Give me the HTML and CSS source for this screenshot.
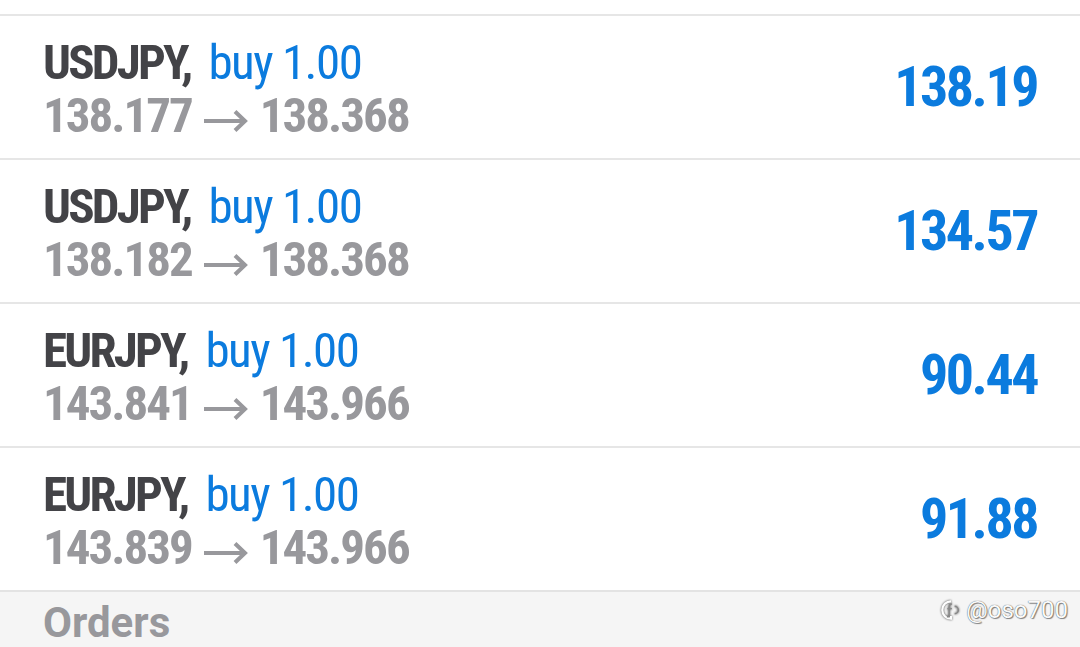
FILE: index.html
```html
<!DOCTYPE html>
<html lang="en">
<head>
    <meta charset="UTF-8">
    <meta name="viewport" content="width=device-width, initial-scale=1.0">
    <title>Trade</title>
    <link rel="stylesheet" href="styles.css">
</head>
<body>
    <div class="trade-list">
        <div class="trade-row">
            <div class="trade-info">
                <div class="trade-title"><span class="symbol">USDJPY,</span><span class="side">buy 1.00</span></div>
                <div class="trade-prices">138.177<svg class="arrow" viewBox="0 0 44 24" width="44" height="24"><path d="M0 12H41M31 2.5L41 12L31 21.5" fill="none" stroke="#98989c" stroke-width="4"/></svg>138.368</div>
            </div>
            <div class="profit">138.19</div>
        </div>
        <div class="trade-row">
            <div class="trade-info">
                <div class="trade-title"><span class="symbol">USDJPY,</span><span class="side">buy 1.00</span></div>
                <div class="trade-prices">138.182<svg class="arrow" viewBox="0 0 44 24" width="44" height="24"><path d="M0 12H41M31 2.5L41 12L31 21.5" fill="none" stroke="#98989c" stroke-width="4"/></svg>138.368</div>
            </div>
            <div class="profit">134.57</div>
        </div>
        <div class="trade-row">
            <div class="trade-info">
                <div class="trade-title"><span class="symbol">EURJPY,</span><span class="side">buy 1.00</span></div>
                <div class="trade-prices">143.841<svg class="arrow" viewBox="0 0 44 24" width="44" height="24"><path d="M0 12H41M31 2.5L41 12L31 21.5" fill="none" stroke="#98989c" stroke-width="4"/></svg>143.966</div>
            </div>
            <div class="profit">90.44</div>
        </div>
        <div class="trade-row">
            <div class="trade-info">
                <div class="trade-title"><span class="symbol">EURJPY,</span><span class="side">buy 1.00</span></div>
                <div class="trade-prices">143.839<svg class="arrow" viewBox="0 0 44 24" width="44" height="24"><path d="M0 12H41M31 2.5L41 12L31 21.5" fill="none" stroke="#98989c" stroke-width="4"/></svg>143.966</div>
            </div>
            <div class="profit">91.88</div>
        </div>
    </div>
    <div class="section-header">
        <span class="section-title">Orders</span>
        <span class="watermark">
            <svg class="watermark-icon" viewBox="0 0 24 24" width="22" height="22">
                <path d="M12 2.5a9.5 9.5 0 1 0 0 19h0v-3" fill="none" stroke="#fff" stroke-width="2.4"/>
                <path d="M13 5.5c-2 0-3 1-3 3v8c0 2-1 3-2.5 3M8 10.5h5M16 8a4 4 0 0 1 0 8" fill="none" stroke="#888" stroke-width="1.6"/>
            </svg>
            @oso700
        </span>
    </div>
</body>
</html>
```

FILE: styles.css
```css
body {
    margin: 0;
    background-color: #fff;
    font-family: "Roboto Condensed", "Liberation Sans Narrow", Roboto, sans-serif;
}
.trade-list {
    padding-top: 14px;
}
.trade-row {
    display: flex;
    justify-content: space-between;
    align-items: center;
    height: 142px;
    border-top: 2px solid #e6e6e6;
    padding: 0 43px;
}
.trade-info {
    display: flex;
    flex-direction: column;
    padding-top: 3px;
}
.trade-title, .trade-prices {
    font-size: 49px;
    line-height: 53px;
    white-space: nowrap;
}
.symbol {
    font-weight: bold;
    color: #434347;
    letter-spacing: -2.8px;
    margin-right: 18px;
}
.side {
    color: #0b7bde;
    letter-spacing: -1.5px;
}
.trade-prices {
    font-weight: bold;
    color: #98989c;
    letter-spacing: -2px;
}
.arrow {
    margin: 0 12px 0 12px;
    vertical-align: -1px;
}
.profit {
    font-size: 56px;
    font-weight: bold;
    color: #0b7bde;
    letter-spacing: -2.5px;
}
.section-header {
    display: flex;
    justify-content: space-between;
    align-items: flex-start;
    height: 55px;
    border-top: 2px solid #e3e3e3;
    background-color: #f5f5f5;
    padding: 0 12px 0 43px;
}
.section-title {
    font-family: Roboto, sans-serif;
    font-size: 42px;
    font-weight: bold;
    color: #98989c;
    line-height: 56px;
    padding-top: 3px;
}
.watermark {
    display: flex;
    align-items: center;
    gap: 4px;
    margin-top: 4px;
    font-family: Roboto, sans-serif;
    font-size: 24px;
    color: #fafafa;
    text-shadow: 0 0 1px #333, 1px 1px 1px #888;
}
.watermark-icon {
    filter: drop-shadow(0 0 1px #444);
}
```
